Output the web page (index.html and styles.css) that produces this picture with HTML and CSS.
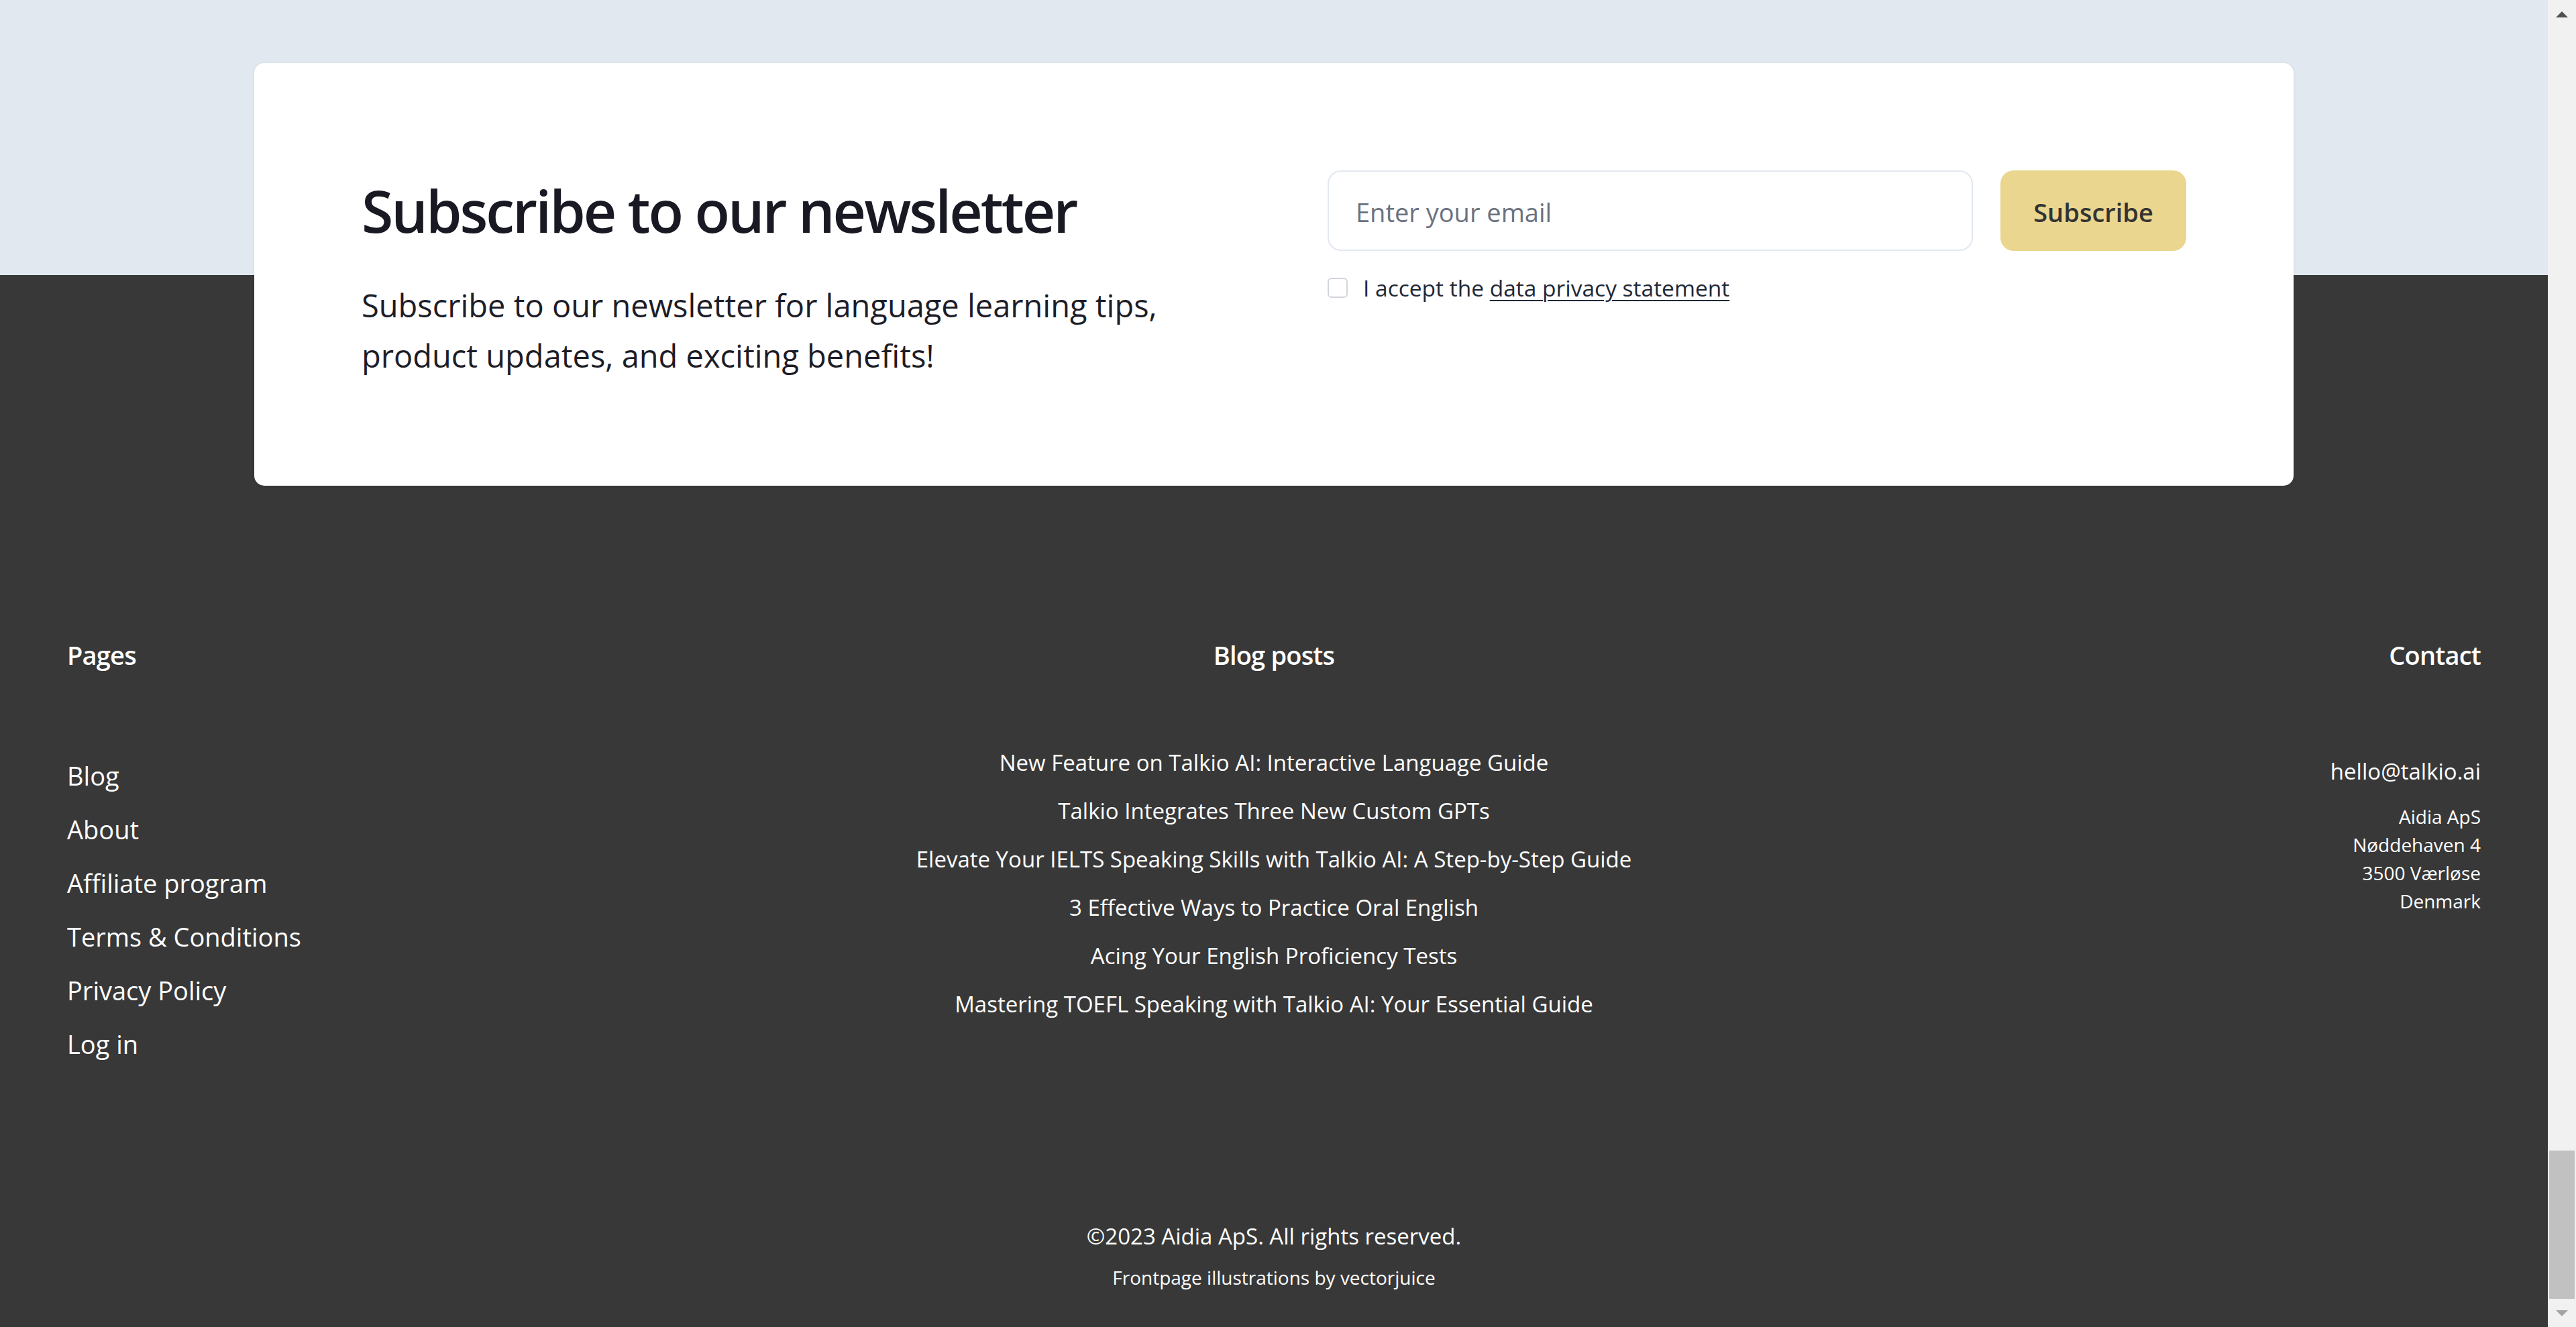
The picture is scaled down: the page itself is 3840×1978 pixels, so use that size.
FILE: index.html
```html
<!DOCTYPE html>
<html lang="en">
<head>
<meta charset="utf-8">
<title>Talkio AI – Newsletter</title>
<link rel="stylesheet" href="styles.css">
</head>
<body>
<div class="page">
  <section class="newsletter">
    <div class="card">
      <div class="card-text">
        <h2 class="card-title">Subscribe to our newsletter</h2>
        <p class="card-lead">Subscribe to our newsletter for language learning tips, product updates, and exciting benefits!</p>
      </div>
      <form class="card-form">
        <div class="form-row">
          <input class="email" type="email" placeholder="Enter your email">
          <button class="btn" type="button">Subscribe</button>
        </div>
        <label class="consent"><input type="checkbox" class="check"><span>I accept the <a href="#">data privacy statement</a></span></label>
      </form>
    </div>
  </section>

  <footer class="footer">
    <div class="cols">
      <div class="col col-left">
        <h3 class="col-title">Pages</h3>
        <ul class="pages">
          <li><a href="#">Blog</a></li>
          <li><a href="#">About</a></li>
          <li><a href="#">Affiliate program</a></li>
          <li><a href="#">Terms &amp; Conditions</a></li>
          <li><a href="#">Privacy Policy</a></li>
          <li><a href="#">Log in</a></li>
        </ul>
      </div>
      <div class="col col-mid">
        <h3 class="col-title">Blog posts</h3>
        <ul class="posts">
          <li><a href="#">New Feature on Talkio AI: Interactive Language Guide</a></li>
          <li><a href="#">Talkio Integrates Three New Custom GPTs</a></li>
          <li><a href="#">Elevate Your IELTS Speaking Skills with Talkio AI: A Step-by-Step Guide</a></li>
          <li><a href="#">3 Effective Ways to Practice Oral English</a></li>
          <li><a href="#">Acing Your English Proficiency Tests</a></li>
          <li><a href="#">Mastering TOEFL Speaking with Talkio AI: Your Essential Guide</a></li>
        </ul>
      </div>
      <div class="col col-right">
        <h3 class="col-title">Contact</h3>
        <p class="mail"><a href="#">hello@talkio.ai</a></p>
        <address class="address">Aidia ApS<br>Nøddehaven 4<br>3500 Værløse<br>Denmark</address>
      </div>
    </div>
    <div class="legal">
      <p class="copy">©2023 Aidia ApS. All rights reserved.</p>
      <p class="credit">Frontpage illustrations by vectorjuice</p>
    </div>
  </footer>
</div>

<div class="scrollbar" aria-hidden="true">
  <div class="sb-btn"><svg width="18" height="9" viewBox="0 0 18 9"><path d="M9 0 L18 9 L0 9 Z" fill="#505050"/></svg></div>
  <div class="sb-track"><div class="sb-thumb"></div></div>
  <div class="sb-btn"><svg width="18" height="9" viewBox="0 0 18 9"><path d="M0 0 L18 0 L9 9 Z" fill="#a3a3a3"/></svg></div>
</div>
</body>
</html>
```

FILE: styles.css
```css
html, body {
  margin: 0;
  height: 1978px;
  overflow: hidden;
}

body {
  display: flex;
  font-family: "Open Sans", "Noto Sans", sans-serif;
  background: #383838;
}

.page {
  flex: 1;
  min-width: 0;
  background: #383838;
}

/* Newsletter */
.newsletter {
  background: linear-gradient(to bottom, #e2e8f0 0, #e2e8f0 410px, #383838 410px);
  padding-top: 94px;
}

.card {
  box-sizing: border-box;
  width: 3040px;
  margin: 0 auto;
  background: #ffffff;
  border-radius: 15px;
  padding: 160px 160px 156px;
  display: flex;
  justify-content: space-between;
  box-shadow: 0 1px 5px rgba(15, 23, 42, 0.07);
}

.card-text {
  width: 1440px;
}

.card-title {
  margin: 0;
  font-size: 86px;
  line-height: 120px;
  font-weight: 600;
  letter-spacing: -3px;
  color: #191923;
}

.card-lead {
  margin: 44px 0 0;
  max-width: 1300px;
  font-size: 47px;
  line-height: 75px;
  color: #1d1d28;
}

.card-form {
  width: 1280px;
}

.form-row {
  display: flex;
  gap: 41px;
}

.email {
  flex: 1;
  min-width: 0;
  box-sizing: border-box;
  height: 120px;
  border: 2.5px solid #e2e8f0;
  border-radius: 20px;
  padding: 4px 40px 0;
  font-family: "Open Sans", sans-serif;
  font-size: 38px;
  color: #111827;
  background: #fff;
  outline: none;
}

.email::placeholder {
  color: #6b7280;
}

.btn {
  width: 277px;
  height: 120px;
  border: 0;
  border-radius: 20px;
  background: #ead68f;
  color: #333333;
  font-family: "Open Sans", sans-serif;
  font-size: 38px;
  font-weight: 600;
  padding: 4px 0 0;
}

.consent {
  display: flex;
  align-items: center;
  margin-top: 30px;
  height: 50px;
  font-size: 33.5px;
  font-weight: 500;
  color: #1f2937;
}

.check {
  appearance: none;
  -webkit-appearance: none;
  box-sizing: border-box;
  width: 30px;
  height: 30px;
  margin: 0 23px 0 0;
  border: 2.5px solid #d1d5db;
  border-radius: 6px;
  background: #fff;
}

.consent a {
  color: #1f2937;
  text-decoration: underline;
  text-decoration-thickness: 2px;
  text-underline-offset: 5px;
}

/* Footer */
.footer {
  padding: 222px 100px 54px;
  color: #ffffff;
}

.footer a {
  color: #ffffff;
  text-decoration: none;
}

.cols {
  display: grid;
  grid-template-columns: 1fr 1fr 1fr;
  align-items: start;
}

.col-mid { text-align: center; }
.col-right { text-align: right; }

.col-title {
  margin: 0;
  font-size: 38px;
  line-height: 60px;
  font-weight: 600;
  letter-spacing: -0.8px;
}

.pages,
.posts {
  list-style: none;
  padding: 0;
}

.pages {
  margin: 110px 0 0;
}

.pages li {
  font-size: 38px;
  line-height: 80px;
}

.posts {
  margin: 95px 0 0;
}

.posts li {
  font-size: 33px;
  line-height: 72px;
}

.mail {
  margin: 119px 0 0;
  font-size: 33px;
  line-height: 50px;
}

.address {
  margin-top: 21px;
  font-style: normal;
  font-size: 28px;
  line-height: 42px;
}

.legal {
  margin-top: 222px;
  text-align: center;
}

.copy {
  margin: 0;
  font-size: 33px;
  line-height: 50px;
}

.credit {
  margin: 16px 0 0;
  font-size: 28px;
  line-height: 40px;
}

/* Browser scrollbar */
.scrollbar {
  flex: none;
  width: 42px;
  height: 1978px;
  background: #f1f1f1;
  display: flex;
  flex-direction: column;
}

.sb-btn {
  height: 42px;
  display: flex;
  align-items: center;
  justify-content: center;
}

.sb-track {
  flex: 1;
  display: flex;
  flex-direction: column;
  justify-content: flex-end;
  align-items: center;
}

.sb-thumb {
  width: 38px;
  height: 221px;
  background: #c1c1c1;
}
```
